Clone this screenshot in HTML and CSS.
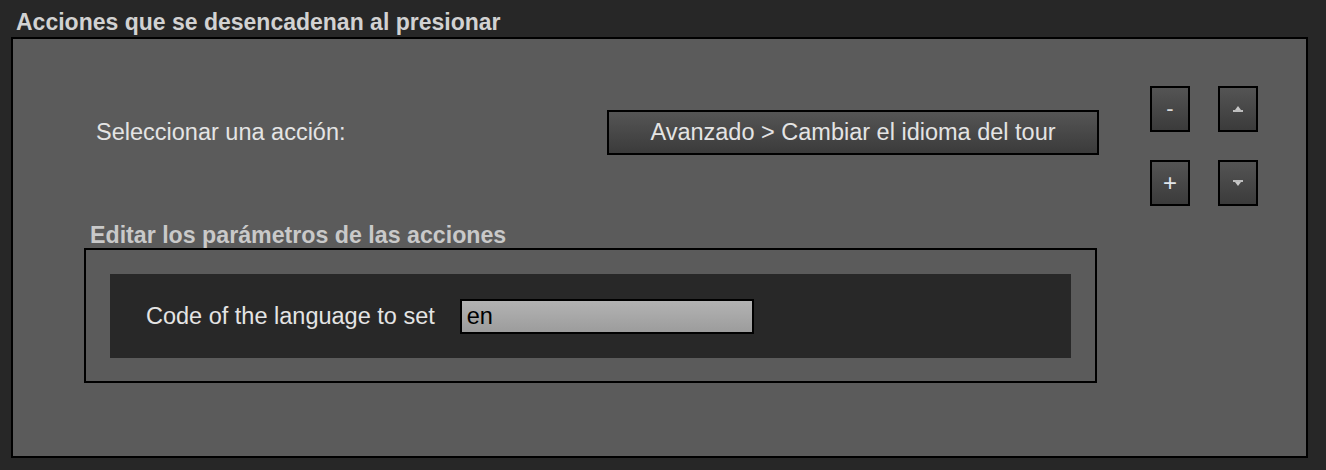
FILE: index.html
```html
<!DOCTYPE html>
<html>
<head>
<meta charset="utf-8">
<link rel="stylesheet" href="styles.css">
</head>
<body>
<div class="page">
  <div class="title">Acciones que se desencadenan al presionar</div>
  <div class="panel">
    <div class="main">
      <div class="select-row">
        <span class="label">Seleccionar una acción:</span>
        <button class="dropdown">Avanzado &gt; Cambiar el idioma del tour</button>
      </div>
      <div class="subtitle">Editar los parámetros de las acciones</div>
      <div class="params">
        <div class="param-row">
          <span class="label">Code of the language to set</span>
          <div class="input">en</div>
        </div>
      </div>
    </div>
    <div class="tools">
      <button class="tool minus">-</button>
      <button class="tool"><svg width="14" height="8" viewBox="0 0 14 8"><polygon points="7,1 10,5 4,5" fill="#c8c8c8"/><rect x="2" y="5" width="10" height="2" fill="#bdbdbd"/></svg></button>
      <button class="tool plus">+</button>
      <button class="tool"><svg width="14" height="8" viewBox="0 0 14 8"><rect x="2" y="1" width="10" height="2" fill="#bdbdbd"/><polygon points="4,3 10,3 7,7" fill="#c8c8c8"/></svg></button>
    </div>
  </div>
</div>
</body>
</html>
```

FILE: styles.css
```css
* { box-sizing: border-box; }
html, body { margin: 0; padding: 0; }
body {
  background: #272727;
  font-family: "Liberation Sans", Arial, sans-serif;
  width: 1326px;
  height: 470px;
  overflow: hidden;
}
.page {
  padding: 8px 18px 12px 11px;
}
.title {
  font-weight: bold;
  font-size: 23px;
  line-height: 29px;
  color: #d2d2d2;
  padding-left: 5px;
}
.panel {
  border: 2px solid #000;
  background: #5b5b5b;
  height: 421px;
  display: flex;
  align-items: flex-start;
}
.main {
  margin-left: 71px;
  width: 1014px;
  display: flex;
  flex-direction: column;
}
.select-row {
  margin-top: 71px;
  display: flex;
  align-items: center;
  justify-content: space-between;
  padding-left: 12px;
}
.label {
  font-size: 23.5px;
  color: #e4e4e4;
}
.dropdown {
  width: 492px;
  height: 45px;
  border: 2px solid #000;
  background: linear-gradient(#555555, #3b3b3b);
  color: #e4e4e4;
  font-family: "Liberation Sans", Arial, sans-serif;
  font-size: 23.5px;
  padding: 0;
  margin-right: -1px;
}
.subtitle {
  margin-top: 68px;
  font-weight: bold;
  font-size: 23.2px;
  line-height: 25px;
  color: #c9c9c9;
  padding-left: 6px;
}
.params {
  border: 2px solid #000;
  height: 135px;
  width: 1013px;
  padding: 24px;
}
.param-row {
  background: #282828;
  height: 84px;
  display: flex;
  align-items: center;
  padding-left: 36px;
  gap: 25px;
}
.input {
  width: 294px;
  height: 35px;
  border: 2px solid #000;
  background: linear-gradient(#b3b3b3, #9c9c9c);
  color: #000;
  font-size: 23.5px;
  line-height: 31px;
  padding-left: 5px;
}
.tools {
  margin-top: 47px;
  margin-left: 52px;
  display: grid;
  grid-template-columns: 40px 40px;
  grid-template-rows: 46px 46px;
  column-gap: 28px;
  row-gap: 28px;
}
.tool {
  border: 2px solid #000;
  background: linear-gradient(#545454, #3b3b3b);
  color: #d8d8d8;
  font-family: "Liberation Sans", Arial, sans-serif;
  font-size: 22px;
  padding: 0;
  display: flex;
  align-items: center;
  justify-content: center;
}
.tool svg { display: block; }
.plus { color: #e0e6ec; font-size: 24px; }
```
